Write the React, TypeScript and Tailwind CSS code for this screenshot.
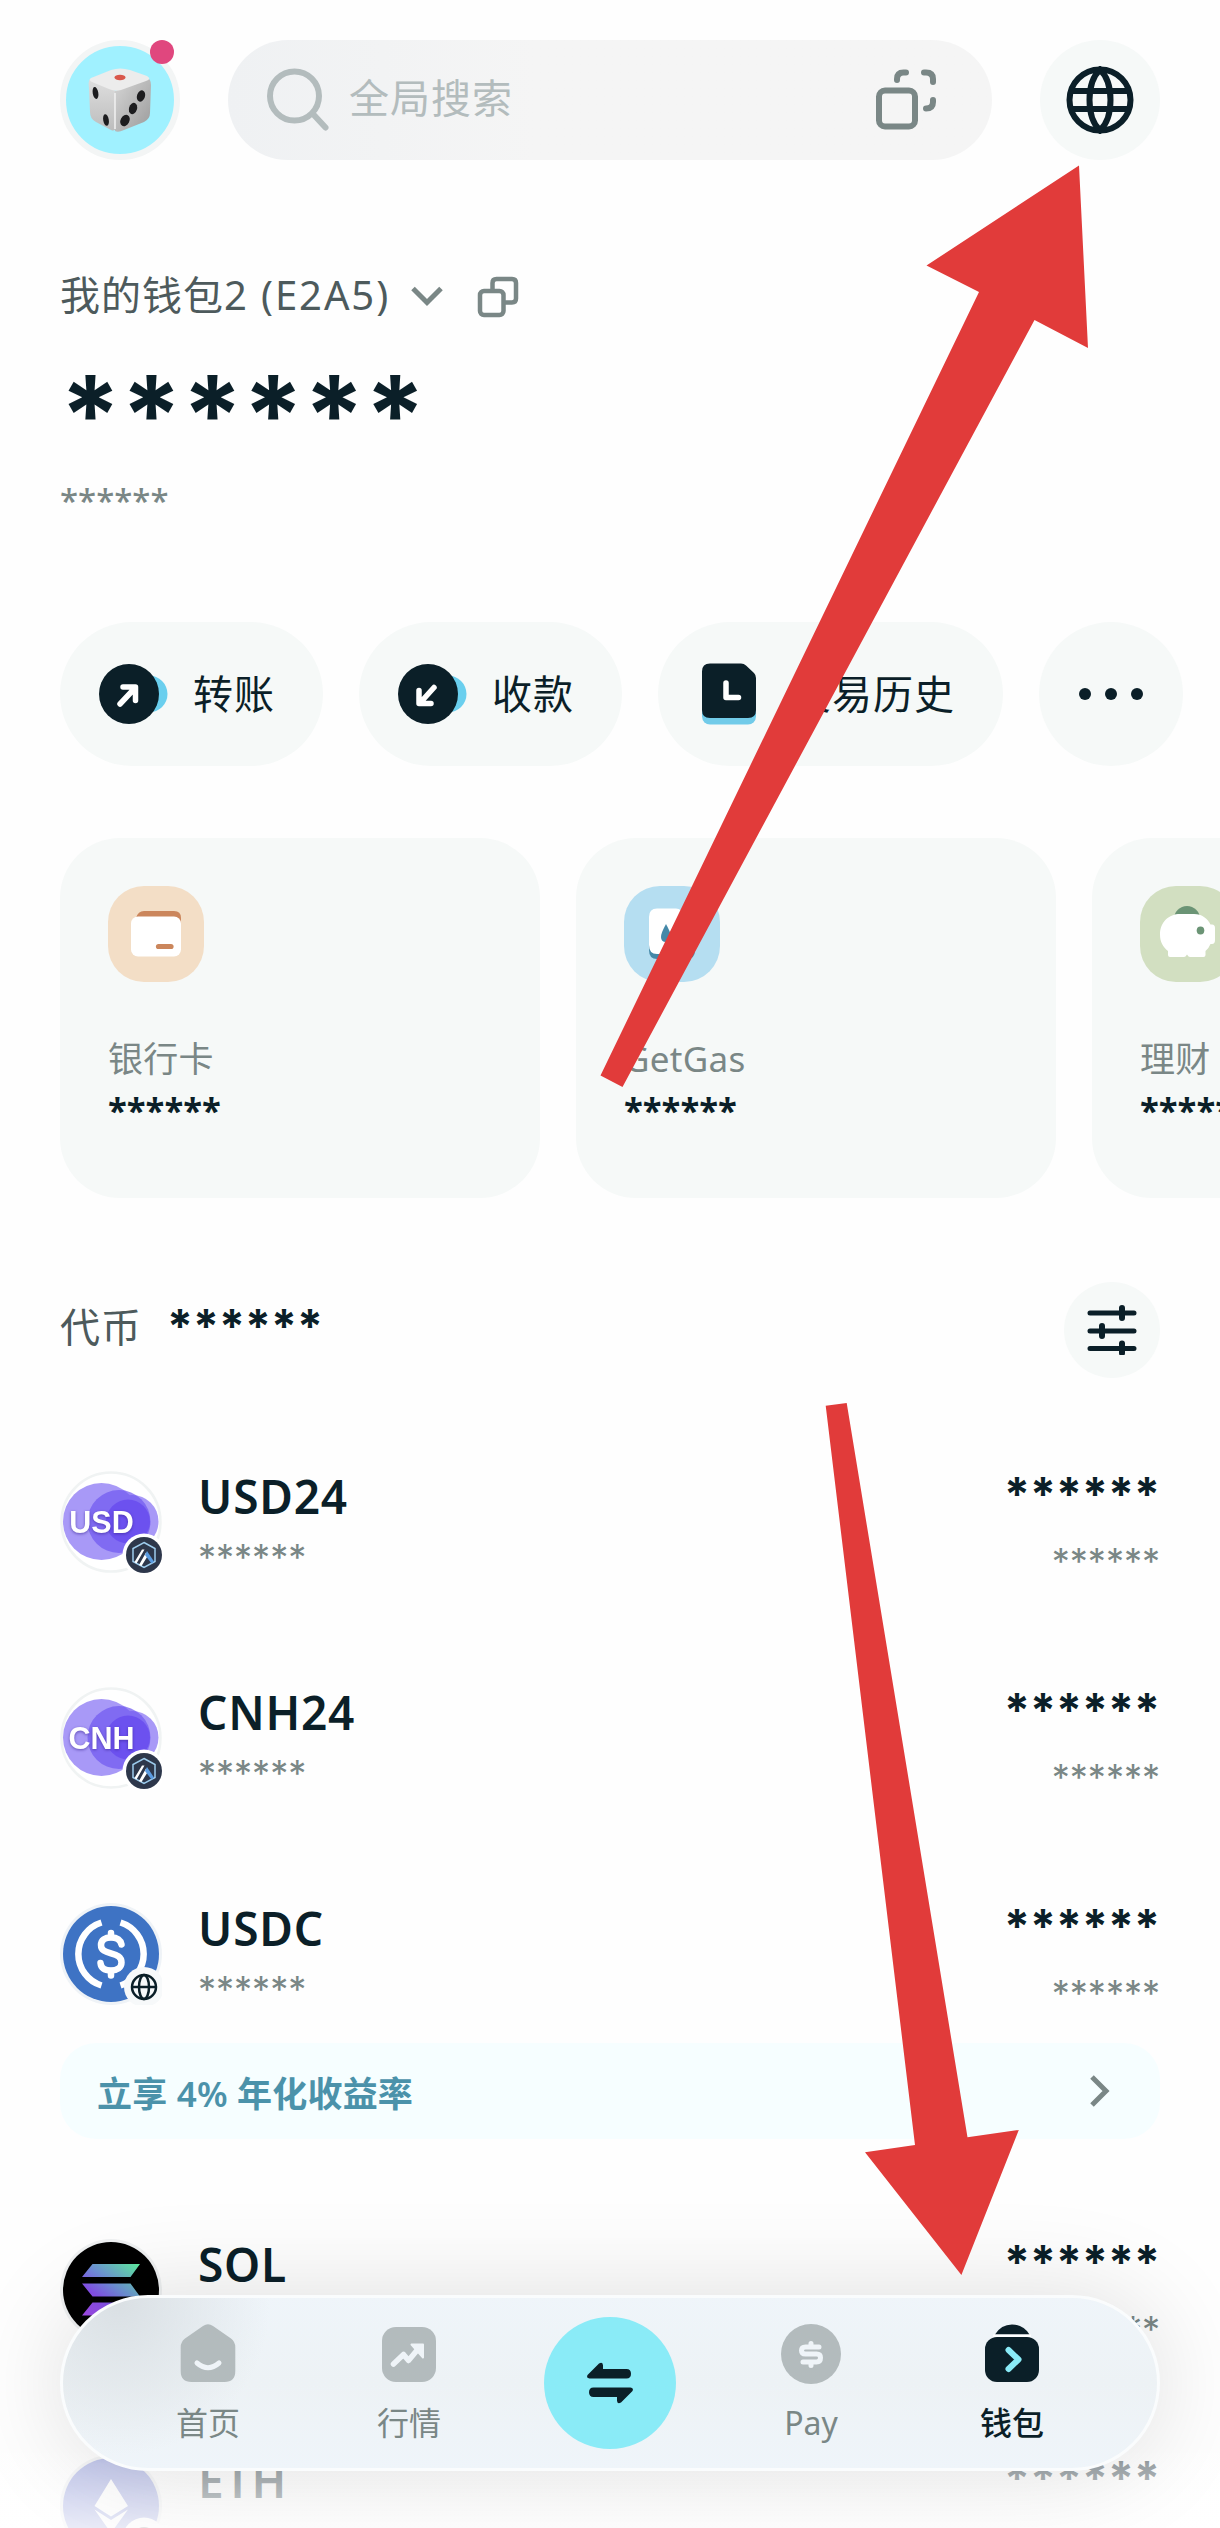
import React from "react";
// Wallet home screen: header + balance + quick actions + cards + token list + floating tab bar

interface Token {
  symbol: string;
  Icon: () => React.ReactElement;
}

interface TabItem {
  label: string;
  Icon: () => React.ReactElement;
  active?: boolean;
}

const MASK = "******";

/* ---------- header icons ---------- */

const DiceIcon = () => (
  <svg className="h-[66px] w-[66px]" viewBox="0 0 66 66">
    <defs>
      <linearGradient id="diceRight" x1="0" y1="0" x2="1" y2="1">
        <stop offset="0" stopColor="#d6d6d6" />
        <stop offset="1" stopColor="#9b9b9b" />
      </linearGradient>
      <linearGradient id="diceLeft" x1="0" y1="0" x2="0" y2="1">
        <stop offset="0" stopColor="#dedede" />
        <stop offset="1" stopColor="#bdbdbd" />
      </linearGradient>
    </defs>
    <path d="M3 12 Q1 14 2 22 L3 45 Q3 52 9 55 L24 63 Q28 65 29 60 L29 24 Z" fill="url(#diceLeft)" />
    <path d="M28 24 L28 64 Q31 66 37 63 L57 55 Q63 52 63 46 L64 18 Q64 12 60 11 Z" fill="url(#diceRight)" />
    <path d="M4 11 L24 3 Q33 0 43 3 L60 9 Q65 12 59 14 L34 23 Q28 25 22 22 L5 15 Q1 13 4 11 Z" fill="#ececec" />
    <path d="M28 26 V62" stroke="#efefef" strokeWidth="1.6" />
    <ellipse cx="33" cy="10.5" rx="5.5" ry="2.7" fill="#d9574b" />
    <ellipse cx="8.5" cy="26" rx="2.8" ry="6" fill="#1c1c1e" transform="rotate(-10 8.5 26)" />
    <ellipse cx="19" cy="53" rx="2.8" ry="5.8" fill="#1c1c1e" transform="rotate(-10 19 53)" />
    <ellipse cx="54" cy="29" rx="4" ry="5.8" fill="#1c1c1e" transform="rotate(18 54 29)" />
    <ellipse cx="46" cy="41.5" rx="4" ry="5.8" fill="#1c1c1e" transform="rotate(18 46 41.5)" />
    <ellipse cx="38" cy="53.5" rx="4.4" ry="6" fill="#1c1c1e" transform="rotate(28 38 53.5)" />
  </svg>
);

const SearchIcon = () => (
  <svg className="h-[64px] w-[64px]" viewBox="0 0 64 64" fill="none" stroke="#b3bcbd" strokeWidth="6" strokeLinecap="round">
    <circle cx="27.5" cy="28" r="24.5" />
    <path d="M46 46 L58.5 59.5" />
  </svg>
);

const ScanIcon = () => (
  <svg className="h-[64px] w-[60px]" viewBox="0 0 60 64" fill="none" stroke="#7a8786" strokeWidth="6" strokeLinecap="round" strokeLinejoin="round">
    <rect x="3" y="22.5" width="36" height="36" rx="6" />
    <path d="M21 12 V11 Q21 4.5 27.5 4.5 H30" />
    <path d="M48 4.5 H50 Q57 4.5 57 11 V14" />
    <path d="M57 32 V34 Q57 40.5 50 40.5" />
  </svg>
);

const GlobeIcon = () => (
  <svg className="h-[68px] w-[68px]" viewBox="0 0 68 68" fill="none" stroke="#0b1f28" strokeWidth="6">
    <circle cx="34" cy="34" r="30.5" />
    <path d="M34 3.5 C20 17 20 51 34 64.5 C48 51 48 17 34 3.5 Z" />
    <path d="M5 25 H63 M5 43 H63" />
  </svg>
);

const CopyIcon = () => (
  <svg className="h-[42px] w-[42px]" viewBox="0 0 42 42" fill="none" stroke="#7a8786" strokeWidth="4.5">
    <rect x="3" y="15" width="23.5" height="24" rx="4" />
    <path d="M15.5 15 V7 Q15.5 3 19.5 3 H35 Q39 3 39 7 V22.5 Q39 26.5 35 26.5 H27" />
  </svg>
);

/* ---------- quick action icons ---------- */

const SendIcon = () => (
  <svg className="h-[62px] w-[69px]" viewBox="0 0 69 62">
    <circle cx="50" cy="31" r="18.5" fill="#6acfee" />
    <circle cx="30" cy="31" r="30" fill="#0b1f28" />
    <path d="M21 41 L36 25 M24 24 H36.5 V37.5" fill="none" stroke="#fff" strokeWidth="5.5" strokeLinecap="round" strokeLinejoin="round" />
  </svg>
);

const ReceiveIcon = () => (
  <svg className="h-[62px] w-[69px]" viewBox="0 0 69 62">
    <circle cx="50" cy="31" r="18.5" fill="#6acfee" />
    <circle cx="30" cy="31" r="30" fill="#0b1f28" />
    <path d="M36 24.5 L22 40 M21 27.5 V40.5 H33" fill="none" stroke="#fff" strokeWidth="5.5" strokeLinecap="round" strokeLinejoin="round" />
  </svg>
);

const HistoryIcon = () => (
  <svg className="h-[62px] w-[69px]" viewBox="1 0 69 62">
    <rect x="6" y="30" width="54" height="31.5" rx="8" fill="#71cbe9" />
    <path d="M14 0.5 H45 Q48 0.5 50 2.5 L58 10 Q60 12 60 15 V47 Q60 55 52 55 H14 Q6 55 6 47 V8.5 Q6 0.5 14 0.5 Z" fill="#0b1f28" />
    <path d="M30 20 V34.5 H42.5" fill="none" stroke="#fff" strokeWidth="5.5" strokeLinecap="round" strokeLinejoin="round" />
  </svg>
);

/* ---------- card icons ---------- */

const CardIcon = () => (
  <svg className="h-24 w-24" viewBox="0 0 96 96">
    <path d="M28 32 Q30 25 36 25 H66 Q73 25 73 32 V40 H28 Z" fill="#cb865c" />
    <rect x="23" y="30.5" width="50" height="40" rx="7" fill="#fff" />
    <path d="M50.5 60.5 H63" stroke="#cb865c" strokeWidth="5.2" strokeLinecap="round" />
  </svg>
);

const GasIcon = () => (
  <svg className="h-24 w-24" viewBox="0 0 96 96">
    <path d="M25 50 H71 V64 Q71 73 63 73 H33 Q25 73 25 64 Z" fill="#4488a8" />
    <path d="M33 22.5 H52 Q55 22.5 57 24.5 L69 35 Q71 37 71 40 V59 Q71 68 63 68 H33 Q25 68 25 59 V31 Q25 22.5 33 22.5 Z" fill="#fff" />
    <path d="M42 38 Q37 47 37 51 Q37 56 42 56 Q47 56 47 51 Q47 47 42 38 Z" fill="#4488a8" />
  </svg>
);

const PiggyIcon = () => (
  <svg className="h-24 w-24" viewBox="0 0 96 96">
    <circle cx="47" cy="33" r="13" fill="#6b9475" />
    <path d="M40 28 H54 C62 28 68 33 70.5 38.5 H72 Q75 38.5 75 42 V54 Q75 58 72 58 H70.5 Q69 62 65.5 65 V69 Q65.5 71 63.5 71 H50 Q48.5 71 47 68.5 Q45.5 71 44 71 H30 Q28 71 28 69 V65 C23 61 20 56 20 48.5 C20 36 29 28 40 28 Z" fill="#fff" />
    <ellipse cx="60.5" cy="44.5" rx="3.8" ry="4" fill="#6b9475" />
  </svg>
);

/* ---------- token icons ---------- */

const ArbitrumBadge = () => (
  <g>
    <circle cx="84" cy="84" r="21.5" fill="#fff" />
    <circle cx="84" cy="84" r="18" fill="#2d374b" />
    <path d="M84 71.5 L95 77.5 V90.5 L84 96.5 L73 90.5 V77.5 Z" fill="none" stroke="#9dcced" strokeWidth="1.5" />
    <path d="M74.5 91 L82 78.5 H84.5 L76.5 92.5 Z M79 94 L86 81.5 L88 84.5 L81.5 95 Z" fill="#fff" />
    <path d="M87 80 L94 90.5 L91.5 92.5 L85 84 Z" fill="#5a9be0" />
  </g>
);

const FiatIcon = ({ code }: { code: string }) => (
  <svg className="h-[102px] w-[102px] shrink-0" viewBox="0 0 102 102">
    <circle cx="51" cy="51" r="49.5" fill="#fff" stroke="#f0f3f3" strokeWidth="2.5" />
    <circle cx="72" cy="50.5" r="26.5" fill="#a899f7" />
    <circle cx="41.5" cy="50.5" r="38.5" fill="#a899f7" />
    <circle cx="59" cy="50.5" r="31.5" fill="#7059f0" fillOpacity="0.72" />
    <circle cx="68" cy="50.5" r="22" fill="#6446ee" fillOpacity="0.7" />
    <text
      x="41.5"
      y="61.5"
      textAnchor="middle"
      fontSize="30.5"
      fontWeight="700"
      fill="#fff"
      fontFamily='"Liberation Sans", sans-serif'
      style={{ filter: "drop-shadow(0 1.5px 1.5px rgba(50,30,140,.6))" }}
    >
      {code}
    </text>
    <ArbitrumBadge />
  </svg>
);

const Usd24Icon = () => <FiatIcon code="USD" />;
const Cnh24Icon = () => <FiatIcon code="CNH" />;

const UsdcIcon = () => (
  <svg className="h-[102px] w-[102px] shrink-0" viewBox="0 0 102 102" fill="none">
    <circle cx="51" cy="51" r="51" fill="#eff3f7" />
    <circle cx="51" cy="51" r="48" fill="#3e73c4" />
    <g stroke="#fff" strokeWidth="6.5">
      <path d="M41.5 19.5 A33 33 0 0 0 41.5 82.5" />
      <path d="M60.5 19.5 A33 33 0 0 1 60.5 82.5" />
      <path d="M61.5 41.5 C60.5 36.5 57 34.5 51 34.5 C45 34.5 41 37 41 42 C41 47.5 45.5 48.8 51 50.3 C57 52 61.5 53.5 61.5 59.5 C61.5 64.5 57 67.5 51 67.5 C44.5 67.5 41 65 40.5 60" strokeLinecap="round" />
      <path d="M51 30 V34 M51 68 V72.5" strokeLinecap="round" />
    </g>
    <circle cx="84" cy="84" r="20" fill="#f7f9fa" />
    <g stroke="#0b1f28" strokeWidth="2.5">
      <circle cx="84" cy="84" r="12" />
      <ellipse cx="84" cy="84" rx="5" ry="12" />
      <path d="M72 84 H96" />
    </g>
  </svg>
);

const SolIcon = () => (
  <svg className="h-[102px] w-[102px] shrink-0" viewBox="0 0 102 102">
    <defs>
      <linearGradient id="sol" gradientUnits="userSpaceOnUse" x1="76" y1="22" x2="30" y2="80">
        <stop offset="0" stopColor="#5ff0a0" />
        <stop offset="0.45" stopColor="#6f8fd8" />
        <stop offset="0.7" stopColor="#8450e8" />
        <stop offset="1" stopColor="#a04be8" />
      </linearGradient>
    </defs>
    <circle cx="51" cy="51" r="51" fill="#eff1f2" />
    <circle cx="51" cy="51" r="48" fill="#000" />
    <path d="M32.5 25 H80 L70.5 38 H22 Z M22 44.5 H70.5 L80 57.5 H32.5 Z M32.5 63.5 H80 L70.5 76.5 H22 Z" fill="url(#sol)" />
  </svg>
);

const EthIcon = () => (
  <svg className="h-[102px] w-[102px] shrink-0" viewBox="0 0 102 102">
    <circle cx="51" cy="51" r="51" fill="#e9ebee" />
    <circle cx="51" cy="51" r="48" fill="#7480d4" />
    <path d="M51 24 L68 51 L51 61.5 L34.5 51 Z M34.5 54.5 L51 65 L68 54.5 L51 78 Z" fill="#fff" />
    <circle cx="84" cy="84" r="21.5" fill="#fff" />
    <circle cx="84" cy="84" r="12" fill="#5c6468" />
  </svg>
);

const tokens: Token[] = [
  { symbol: "USD24", Icon: Usd24Icon },
  { symbol: "CNH24", Icon: Cnh24Icon },
  { symbol: "USDC", Icon: UsdcIcon },
];

const moreTokens: Token[] = [
  { symbol: "SOL", Icon: SolIcon },
  { symbol: "ETH", Icon: EthIcon },
];

const actions = [
  { label: "转账", Icon: SendIcon },
  { label: "收款", Icon: ReceiveIcon },
  { label: "交易历史", Icon: HistoryIcon },
];

const cards = [
  { label: "银行卡", Icon: CardIcon, tile: "bg-[#f3dec6]" },
  { label: "GetGas", Icon: GasIcon, tile: "bg-[#b5def1]" },
  { label: "理财", Icon: PiggyIcon, tile: "bg-[#d2dfc1]" },
];

/* ---------- tab bar icons ---------- */

const HomeIcon = () => (
  <svg className="h-[60px] w-[60px]" viewBox="0 0 60 60">
    <path d="M25 2 Q30 -1.5 35 2 L53 14.5 Q57.3 18 57.3 23 V47 Q57.3 58 46.5 58 H13.5 Q2.7 58 2.7 47 V23 Q2.7 18 7 14.5 Z" fill="#b3bbbd" />
    <path d="M19 39 Q30 48.5 41 39" fill="none" stroke="#eff4f8" strokeWidth="5" strokeLinecap="round" />
  </svg>
);

const MarketIcon = () => (
  <svg className="h-[60px] w-[60px]" viewBox="0 0 60 60">
    <rect x="3" y="3" width="54" height="55" rx="14" fill="#b3bbbd" />
    <path d="M14.5 40 L24.5 30.5 L29.5 36.5 L39.5 24.5" fill="none" stroke="#eff4f8" strokeWidth="5.5" strokeLinecap="round" strokeLinejoin="round" />
    <path d="M32.5 20.5 H44 V33.5 Z" fill="#eff4f8" stroke="#eff4f8" strokeWidth="2" strokeLinejoin="round" />
  </svg>
);

const PayIcon = () => (
  <svg className="h-[60px] w-[60px]" viewBox="0 0 60 60">
    <circle cx="30" cy="30" r="30" fill="#b3bbbd" />
    <path d="M38 23 H24.5 Q20.5 23 20.5 26.5 Q20.5 30 24.5 30 H35.5 Q39.5 30 39.5 33.8 Q39.5 38 35.5 38 H22 M30 19.5 V22 M30 39 V41.5" fill="none" stroke="#eff4f8" strokeWidth="5" strokeLinecap="round" strokeLinejoin="round" />
  </svg>
);

const WalletIcon = () => (
  <svg className="h-[60px] w-[60px]" viewBox="0 0 60 60">
    <path d="M13 10.5 Q19 0.5 30 0.5 Q41 0.5 47.5 10.5 Z" fill="#0b1f28" />
    <path d="M11 11.7 H49" stroke="#fff" strokeWidth="2.4" />
    <rect x="3" y="13" width="54" height="45" rx="12" fill="#0b1f28" />
    <path d="M26.5 26 L36.5 35.5 L26.5 45" fill="none" stroke="#8aebf7" strokeWidth="6" strokeLinecap="round" strokeLinejoin="round" />
  </svg>
);

const SwapIcon = () => (
  <svg className="h-[44px] w-[48px]" viewBox="0 0 48 44" fill="#0b1f28">
    <path d="M1.5 14 L13 2.5 Q17 0.5 17 4.5 V8 H40.5 Q45 8 45 12.7 Q45 17.5 40.5 17.5 H3.5 Q0 17 1.5 14 Z" />
    <path d="M46.5 30 L35 41.5 Q31 43.5 31 39.5 V36 H7.5 Q3 36 3 31.3 Q3 26.5 7.5 26.5 H44.5 Q48 27 46.5 30 Z" />
  </svg>
);

const tabs: TabItem[] = [
  { label: "首页", Icon: HomeIcon },
  { label: "行情", Icon: MarketIcon },
  { label: "", Icon: SwapIcon },
  { label: "Pay", Icon: PayIcon },
  { label: "钱包", Icon: WalletIcon, active: true },
];

function TokenRow({ symbol, Icon }: Token) {
  return (
    <div className="flex h-[120px] items-center">
      <Icon />
      <div className="ml-9 flex-1">
        <div className="text-[46px] leading-[60px] font-semibold tracking-[0.8px]">{symbol}</div>
        <div className="mt-[9px] font-[Inter] text-[36px] leading-[44px] text-[#7a8786]">{MASK}</div>
      </div>
      <div className="pt-[3px] text-right font-[Inter]">
        <div className="text-[46.5px] leading-[60px] font-bold">{MASK}</div>
        <div className="mt-[15px] text-[36px] leading-[44px] text-[#7a8786]">{MASK}</div>
      </div>
    </div>
  );
}

export default function App() {
  return (
    <div className="relative h-[2528px] w-[1220px] overflow-hidden bg-[#fefefe] px-[60px] pt-10 font-['Noto_Sans','Noto_Sans_CJK_SC',sans-serif] text-[#0b1f28]">
      {/* Header */}
      <header className="flex items-center">
        <div className="relative flex size-[120px] items-center justify-center rounded-full border-[6px] border-[#f3f5f5] bg-[#a0f1ff]">
          <DiceIcon />
          <span className="absolute -top-[6px] right-0 size-6 rounded-full bg-[#e0477e]" />
        </div>
        <div className="ml-12 flex h-[120px] w-[764px] items-center rounded-full bg-linear-to-r from-[#eff1f3] to-[#f5f5f5] to-40% pr-[56px] pl-[39px]">
          <SearchIcon />
          <span className="ml-[18px] flex-1 pb-[5px] text-[40px] leading-[56px] tracking-[1px] text-[#b3bcbd]">全局搜索</span>
          <ScanIcon />
        </div>
        <div className="ml-12 flex size-[120px] items-center justify-center rounded-full bg-[#f6f9f8]">
          <GlobeIcon />
        </div>
      </header>

      {/* Balance */}
      <div className="mt-[107px] flex h-14 items-center text-[#4d5a5c]">
        <span className="text-[40px] leading-[56px] tracking-[1px]">
          我的钱包<span className="tracking-[1.9px]">2 (E2A5)</span>
        </span>
        <svg className="mt-1 ml-[20px] h-[24px] w-[34px]" viewBox="0 0 34 24" fill="none" stroke="#7a8786" strokeWidth="5">
          <path d="M3 3.5 L17 17.5 L31 3.5" />
        </svg>
        <span className="mt-[4px] ml-[33px]">
          <CopyIcon />
        </span>
      </div>
      <div className="mt-[36px] font-[Inter] text-[109px] leading-[110px] font-bold">{MASK}</div>
      <div className="mt-[10px] text-[33px] leading-[44px] font-medium text-[#7a8786]">{MASK}</div>

      {/* Quick actions */}
      <div className="mt-[99px] flex gap-9">
        {actions.map(({ label, Icon }) => (
          <div key={label} className="flex h-36 shrink-0 items-center rounded-full bg-[#f6f9f8] pr-12 pl-[39px]">
            <Icon />
            <span className="ml-[25px] text-[40px] leading-[56px] tracking-[1px] whitespace-nowrap">{label}</span>
          </div>
        ))}
        <div className="flex size-36 shrink-0 items-center justify-center gap-[14px] rounded-full bg-[#f6f9f8]">
          <span className="size-3 rounded-full bg-[#0b1f28]" />
          <span className="size-3 rounded-full bg-[#0b1f28]" />
          <span className="size-3 rounded-full bg-[#0b1f28]" />
        </div>
      </div>

      {/* Feature cards, third one runs off screen */}
      <div className="mt-[72px] flex gap-9">
        {cards.map(({ label, Icon, tile }) => (
          <div key={label} className="h-[360px] w-[480px] shrink-0 rounded-[60px] bg-[#f6f9f8] px-12 pt-12">
            <div className={`size-24 overflow-hidden rounded-[36px] ${tile}`}>
              <Icon />
            </div>
            <div className="mt-[53px] text-[35px] leading-[48px] tracking-[0.3px] text-[#7a8786]">{label}</div>
            <div className="mt-[5px] font-['Open_Sans'] text-[34.5px] leading-[44px] font-bold">{MASK}</div>
          </div>
        ))}
      </div>

      {/* Token list */}
      <div className="mt-[84px] flex h-24 items-center">
        <span className="pb-[6px] text-[40px] leading-[56px] tracking-[1px] text-[#4d5a5c]">代币</span>
        <span className="ml-[25px] flex-1 pb-[9px] font-[Inter] text-[46.5px] leading-[56px] font-bold">{MASK}</span>
        <div className="flex size-24 items-center justify-center rounded-full bg-[#f6f9f8]">
          <svg className="h-[50px] w-[50px]" viewBox="0 0 50 50" stroke="#0b1f28" strokeWidth="5" strokeLinecap="round">
            <path d="M3 8 H47 M3 26 H47 M3 43.5 H47" />
            <path d="M35 3 V13 M15 21 V31 M35 38.5 V48" strokeWidth="6" />
          </svg>
        </div>
      </div>

      <div className="mt-[84px] flex flex-col gap-24">
        {tokens.map((t) => (
          <TokenRow key={t.symbol} {...t} />
        ))}
      </div>

      <div className="mt-[29px] flex h-24 items-center justify-between rounded-[36px] bg-[#f6feff] pr-[48px] pl-[37px]">
        <span className="pt-[5px] text-[35px] leading-[48px] font-bold tracking-[0.2px] text-[#4b92aa]">
          立享 <span className="font-semibold">4%</span> 年化收益率
        </span>
        <svg className="h-[34px] w-[24px]" viewBox="0 0 24 34" fill="none" stroke="#7a8786" strokeWidth="5">
          <path d="M4 3 L18 17 L4 31" />
        </svg>
      </div>

      <div className="mt-[91px] flex flex-col gap-24">
        {moreTokens.map((t) => (
          <TokenRow key={t.symbol} {...t} />
        ))}
      </div>

      {/* Bottom fade under the tab bar */}
      <div className="absolute inset-x-0 bottom-0 h-[128px] bg-linear-to-b from-white/0 via-white/60 via-50% to-white/85" />

      <nav className="absolute inset-x-[60px] bottom-[57px] flex h-[176px] items-start rounded-full border-[3px] border-[#fafcfd] bg-[#eef4f8] bg-[radial-gradient(circle_at_60px_10px,#dae0e4,transparent_150px),linear-gradient(to_bottom,#eff5fa,#edf2f5_50%,#eff5fa)] bg-origin-border px-[44.5px] pt-[26px] shadow-[0_0_100px_rgba(0,0,0,0.13)]">
        {tabs.map(({ label, Icon, active }) =>
          label ? (
            <div key={label} className="flex w-[201px] shrink-0 flex-col items-center">
              <Icon />
              <span
                className={
                  active
                    ? "mt-[17px] text-[32px] leading-[44px] font-medium"
                    : "mt-[17px] text-[32px] leading-[44px] text-[#7a8786]"
                }
              >
                {label}
              </span>
            </div>
          ) : (
            <div key="swap" className="-mt-[7px] flex w-[201px] shrink-0 justify-center">
              <div className="flex size-[132px] items-center justify-center rounded-full bg-[#8aebf7]">
                <Icon />
              </div>
            </div>
          )
        )}
      </nav>

      {/* Pointer arrows */}
      <svg className="pointer-events-none absolute top-0 left-0 h-[2528px] w-[1220px]" viewBox="0 0 1220 2528" fill="#e13b3a">
        <path d="M1079 165.5 L1088 348 L1034.5 320 L622.5 1087 L600.5 1075.5 L979 292 L926.5 265.5 Z" />
        <path d="M825.7 1405.7 L846.7 1402.9 L967.5 2137.3 L1018.8 2130 L961.4 2275 L865 2152.3 L915 2145 Z" />
      </svg>
    </div>
  );
}
